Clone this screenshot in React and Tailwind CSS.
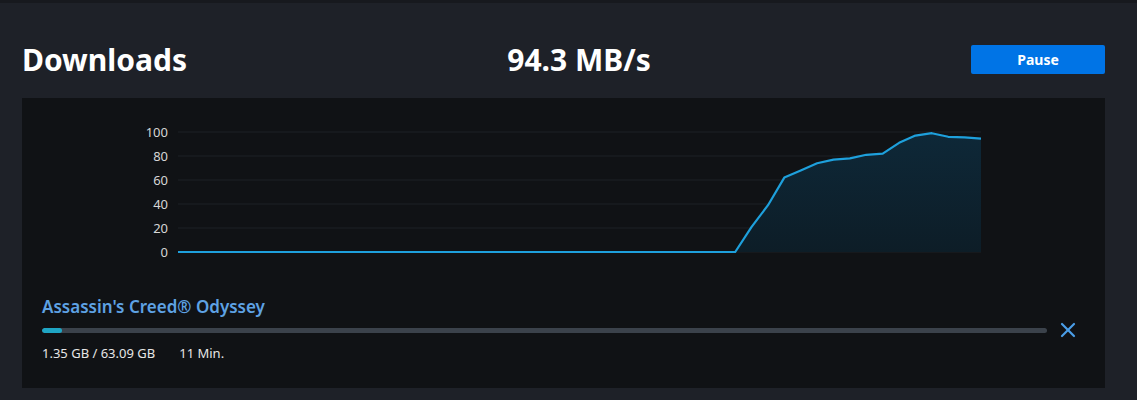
import { X } from "lucide-react";

const speeds = [
    ...Array(35).fill(0),
    21, 39, 62, 68, 74, 77, 78, 81, 82, 91, 97, 99, 96, 95.5, 94.5,
];

function SpeedChart() {
    const left = 156;
    const right = 959;
    const zeroY = 154;
    const step = (right - left) / (speeds.length - 1);
    const pts = speeds.map((v, i) => [left + i * step, zeroY - v * 1.2]);
    const line = pts.map(([x, y], i) => `${i ? "L" : "M"}${x.toFixed(1)} ${y.toFixed(1)}`).join(" ");
    const area = `${line} L${right} ${zeroY} L${left} ${zeroY} Z`;
    const ticks = [0, 20, 40, 60, 80, 100];

    return (
        <svg width="1083" height="198" className="block">
            <defs>
                <linearGradient id="fill" x1="0" y1="0" x2="0" y2="1">
                    <stop offset="0" stopColor="#0e2838" />
                    <stop offset="1" stopColor="#0d1d27" />
                </linearGradient>
            </defs>
            {ticks.map((t) => (
                <g key={t}>
                    <line x1={left} x2={right} y1={zeroY - t * 1.2} y2={zeroY - t * 1.2} stroke="#1d2026" strokeWidth="1" />
                    <text
                        x="146"
                        y={zeroY - t * 1.2 + 4.5}
                        textAnchor="end"
                        fill="#d6d6d6"
                        fontSize="13"
                        fontFamily="'Noto Sans', sans-serif"
                    >
                        {t}
                    </text>
                </g>
            ))}
            <path d={area} fill="url(#fill)" />
            <path d={line} fill="none" stroke="#1ea0dc" strokeWidth="2.2" strokeLinejoin="round" />
        </svg>
    );
}

export default function App() {
    return (
        <div className="w-[1137px] h-[400px] bg-[#1e2128] border-t-[3px] border-[#17191e] font-['Noto_Sans',sans-serif] text-white overflow-hidden">
            {/* Header */}
            <div className="h-[95px] pl-[22px] pr-[32px] pt-[18px] flex items-center">
                <h1 className="text-[30px] font-bold leading-none">Downloads</h1>
                <div className="flex-1 text-center text-[30px] font-bold leading-none">94.3 MB/s</div>
                <button className="w-[134px] h-[29px] rounded-[2px] bg-[#0074e6] text-[14px] font-bold">
                    Pause
                </button>
            </div>

            {/* Panel */}
            <div className="ml-[22px] mr-[32px] h-[290px] bg-[#101215]">
                <SpeedChart />
                <div className="pl-[20px] pr-[25px]">
                    <div className="text-[17px] font-semibold text-[#5ea2e4] leading-[22px]">
                        Assassin's Creed® Odyssey
                    </div>
                    <div className="flex items-center">
                        <div className="flex-1 h-[5px] rounded-full bg-[#3b424b] overflow-hidden">
                            <div className="w-[20px] h-full bg-[#1fa5c4] rounded-full" />
                        </div>
                        <X className="ml-[9px] w-[24px] h-[24px] text-[#4a9ee8]" strokeWidth={2.2} />
                    </div>
                    <div className="flex gap-[24px] text-[13px] leading-[18px] text-[#e6e6e6] mt-[2px]">
                        <span>1.35 GB / 63.09 GB</span>
                        <span>11 Min.</span>
                    </div>
                </div>
            </div>
        </div>
    );
}
